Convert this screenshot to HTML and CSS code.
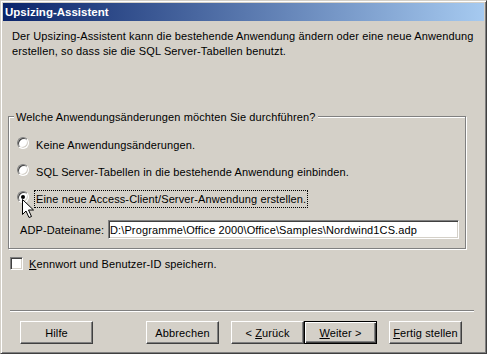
FILE: index.html
```html
<!DOCTYPE html>
<html lang="de">
<head>
<meta charset="UTF-8">
<title>Upsizing-Assistent</title>
<link rel="stylesheet" href="styles.css">
</head>
<body>
<div class="window">
    <div class="titlebar">Upsizing-Assistent</div>
    <div class="dialog">
        <p class="intro">Der Upsizing-Assistent kann die bestehende Anwendung ändern oder eine neue Anwendung erstellen, so dass sie die SQL Server-Tabellen benutzt.</p>

        <fieldset class="group">
            <legend>Welche Anwendungsänderungen möchten Sie durchführen?</legend>
            <div class="option">
                <span class="radio"></span>
                <span class="option-label">Keine Anwendungsänderungen.</span>
            </div>
            <div class="option">
                <span class="radio"></span>
                <span class="option-label">SQL Server-Tabellen in die bestehende Anwendung einbinden.</span>
            </div>
            <div class="option">
                <span class="radio checked"></span>
                <span class="option-label focused">Eine neue Access-Client/Server-Anwendung erstellen.</span>
                <!-- mouse pointer -->
                <svg class="cursor" width="13" height="20" viewBox="0 0 13 20">
                    <path d="M0.5 0.5 L0.5 15.5 L4 12 L7 18.5 L9.5 17.5 L6.5 11 L11.5 11 Z" fill="#fff" stroke="#000" stroke-width="1"/>
                </svg>
            </div>
            <div class="file-row">
                <label for="adp">ADP-Dateiname:</label>
                <input type="text" id="adp" value="D:\Programme\Office 2000\Office\Samples\Nordwind1CS.adp">
            </div>
        </fieldset>

        <div class="check-row">
            <span class="checkbox"></span>
            <span><u>K</u>ennwort und Benutzer-ID speichern.</span>
        </div>

        <div class="separator"></div>

        <div class="buttons">
            <button class="btn btn-help">Hilfe</button>
            <button class="btn btn-cancel">Abbrechen</button>
            <button class="btn btn-back">&lt; <u>Z</u>urück</button>
            <button class="btn btn-default"><u>W</u>eiter &gt;</button>
            <button class="btn btn-finish"><u>F</u>ertig stellen</button>
        </div>
    </div>
</div>
</body>
</html>
```

FILE: styles.css
```css
/* Basic page styling */
body {
    margin: 0;
    background-color: #d4d0c8;
    font-family: "Liberation Sans", Arial, sans-serif;
    font-size: 11px;
    letter-spacing: 0.12px;
    color: #000;
}
/* Window frame */
.window {
    width: 487px;
    height: 354px;
    box-sizing: border-box;
    padding: 2px;
    background-color: #d4d0c8;
    border: 1px solid;
    border-color: #d4d0c8 #404040 #404040 #d4d0c8;
    box-shadow: inset 1px 1px 0 #fff, inset -1px -1px 0 #808080;
}
/* Title bar */
.titlebar {
    height: 18px;
    line-height: 18px;
    padding-left: 2px;
    color: #fff;
    font-size: 11.5px;
    font-weight: bold;
    letter-spacing: 0;
    background: linear-gradient(to right, #0a246a, #a6caf0);
}
.intro {
    margin: 8px 0 0 9px;
    width: 465px;
    line-height: 15px;
}
/* Group box */
.group {
    margin: 50px 0 0 5px;
    padding: 0 0 9px 0;
    width: 456px;
    border: 1px solid #808080;
    box-shadow: 1px 1px 0 #fff, inset 1px 1px 0 #fff;
}
.group legend {
    margin-left: 5px;
    padding: 2px 2px 0 2px;
    line-height: 13px;
    background-color: #d4d0c8;
}
.option {
    position: relative;
    display: flex;
    align-items: flex-start;
    margin: 12px 0 0 8px;
    height: 18px;
}
.option + .option {
    margin-top: 9px;
}
.option-label {
    margin-left: 5px;
    padding: 0 1px;
    line-height: 16px;
    border: 1px dotted transparent;
}
.option-label.focused {
    border-color: #000;
}
.radio {
    position: relative;
    flex: none;
    width: 12px;
    height: 12px;
    margin-top: 1px;
    box-sizing: border-box;
    border-radius: 50%;
    border: 1px solid;
    border-color: #808080 #fff #fff #808080;
    background-color: #fff;
    box-shadow: inset 1px 1px 0 #404040, inset -1px -1px 0 #d4d0c8;
}
.radio.checked::after {
    content: "";
    position: absolute;
    left: 3px;
    top: 3px;
    width: 4px;
    height: 4px;
    border-radius: 50%;
    background-color: #000;
}
.cursor {
    position: absolute;
    left: 5px;
    top: 9px;
}
.file-row {
    display: flex;
    align-items: center;
    margin: 12px 0 0 11px;
}
.file-row label {
    width: 88px;
}
.file-row input {
    width: 351px;
    height: 19px;
    box-sizing: border-box;
    padding: 0 1px;
    font-family: inherit;
    font-size: 11px;
    letter-spacing: inherit;
    border: 1px solid;
    border-color: #808080 #fff #fff #808080;
    box-shadow: inset 1px 1px 0 #404040, inset -1px -1px 0 #d4d0c8;
    outline: none;
}
/* Checkbox */
.check-row {
    display: flex;
    align-items: flex-start;
    margin: 7px 0 0 7px;
    line-height: 16px;
}
.checkbox {
    flex: none;
    width: 13px;
    height: 13px;
    margin: 1px 6px 0 0;
    box-sizing: border-box;
    border: 1px solid;
    border-color: #808080 #fff #fff #808080;
    background-color: #fff;
    box-shadow: inset 1px 1px 0 #404040, inset -1px -1px 0 #d4d0c8;
}
.separator {
    margin: 38px 0 0 7px;
    width: 464px;
    border-top: 1px solid #808080;
    border-bottom: 1px solid #fff;
}
/* Buttons */
.buttons {
    display: flex;
    margin-top: 9px;
}
.btn {
    width: 73px;
    height: 23px;
    padding: 0;
    font-family: inherit;
    font-size: 11px;
    letter-spacing: inherit;
    color: #000;
    background-color: #d4d0c8;
    border: 1px solid;
    border-color: #fff #404040 #404040 #fff;
    box-shadow: inset -1px -1px 0 #808080;
}
.btn-default {
    border: 1px solid #000;
    box-shadow: inset 1px 1px 0 #fff, inset -1px -1px 0 #404040, inset -2px -2px 0 #808080;
}
.btn-help {
    margin-left: 17px;
}
.btn-cancel {
    margin-left: 53px;
}
.btn-back {
    margin-left: 12px;
}
.btn-finish {
    margin-left: 12px;
}
```
